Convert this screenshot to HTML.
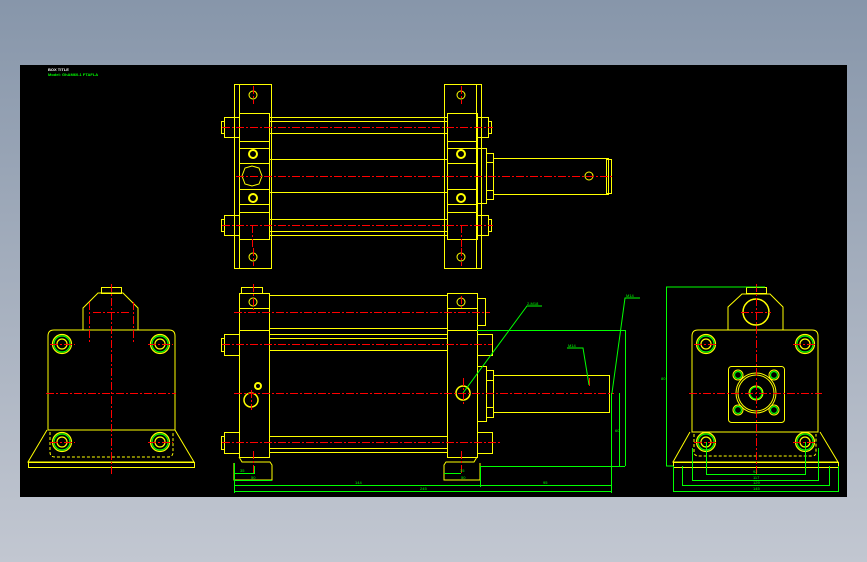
<!DOCTYPE html>
<html><head><meta charset="utf-8"><style>
html,body{margin:0;padding:0;width:867px;height:562px;overflow:hidden;background:linear-gradient(#8796aa,#c2c7d1);}
svg{position:absolute;left:0;top:0}
text{font-family:"Liberation Sans",sans-serif;}
</style></head><body>
<svg width="867" height="562" viewBox="0 0 867 562" xmlns="http://www.w3.org/2000/svg">
<rect x="20" y="65" width="827" height="432" fill="#000"/>
<text x="48" y="71" font-size="4" fill="#fff" font-weight="bold">BOX TITLE</text>
<text x="48" y="76" font-size="4" fill="#0f0" font-weight="bold">Model: GhAM60-1 FTAFLA</text>

<g fill="none" stroke="#ff0" stroke-width="1">
<!-- TOP VIEW -->
<rect x="234.5" y="84.5" width="37" height="184"/>
<line x1="239.5" y1="84" x2="239.5" y2="268"/>
<rect x="239.5" y="113.5" width="30" height="126"/>
<line x1="239" y1="141.5" x2="269" y2="141.5"/><line x1="239" y1="148.5" x2="269" y2="148.5"/>
<line x1="239" y1="163.5" x2="269" y2="163.5"/><line x1="239" y1="189.5" x2="269" y2="189.5"/>
<line x1="239" y1="204.5" x2="269" y2="204.5"/><line x1="239" y1="212.5" x2="269" y2="212.5"/>
<line x1="269" y1="117.5" x2="447" y2="117.5"/><line x1="269" y1="121.5" x2="447" y2="121.5"/><line x1="269" y1="133.5" x2="447" y2="133.5"/>
<line x1="269" y1="159.5" x2="447" y2="159.5"/><line x1="269" y1="192.5" x2="447" y2="192.5"/>
<line x1="269" y1="219.5" x2="447" y2="219.5"/><line x1="269" y1="231.5" x2="447" y2="231.5"/><line x1="269" y1="235.5" x2="447" y2="235.5"/>
<rect x="444.5" y="84.5" width="37" height="184"/>
<line x1="476.5" y1="84" x2="476.5" y2="268"/>
<rect x="447.5" y="113.5" width="30" height="126"/>
<line x1="447" y1="141.5" x2="477" y2="141.5"/><line x1="447" y1="148.5" x2="477" y2="148.5"/>
<line x1="447" y1="163.5" x2="477" y2="163.5"/><line x1="447" y1="189.5" x2="477" y2="189.5"/>
<line x1="447" y1="204.5" x2="477" y2="204.5"/><line x1="447" y1="212.5" x2="477" y2="212.5"/>
<rect x="224.5" y="117.5" width="15" height="20"/><rect x="221.5" y="121.5" width="3" height="12"/>
<rect x="224.5" y="215.5" width="15" height="20"/><rect x="221.5" y="219.5" width="3" height="12"/>
<rect x="477.5" y="117.5" width="11" height="20"/><rect x="488.5" y="121.5" width="3" height="12"/>
<rect x="477.5" y="215.5" width="11" height="20"/><rect x="488.5" y="219.5" width="3" height="12"/>
<rect x="477.5" y="148.5" width="9" height="55"/>
<rect x="486.5" y="153.5" width="7" height="9"/><rect x="486.5" y="190.5" width="7" height="9"/>
<rect x="493.5" y="158.5" width="115" height="36"/>
<rect x="606.5" y="159.5" width="5" height="34"/>
<circle cx="253" cy="95" r="4"/><circle cx="461" cy="95" r="4"/>
<circle cx="253" cy="257" r="4"/><circle cx="461" cy="257" r="4"/>
<circle cx="253" cy="154" r="4" stroke-width="2"/><circle cx="461" cy="154" r="4" stroke-width="2"/>
<circle cx="253" cy="198" r="4" stroke-width="2"/><circle cx="461" cy="198" r="4" stroke-width="2"/>
<polygon points="242,176 245,168 252,166 259,168 262,176 259,184 252,186 245,184"/>
<circle cx="589" cy="176" r="4"/>

<!-- FRONT VIEW -->
<rect x="241.5" y="287.5" width="21" height="6"/>
<rect x="239.5" y="293.5" width="30" height="164"/>
<line x1="239" y1="308.5" x2="269" y2="308.5"/><line x1="239" y1="330.5" x2="269" y2="330.5"/>
<line x1="269" y1="295.5" x2="447" y2="295.5"/>
<line x1="269" y1="328.5" x2="447" y2="328.5"/><line x1="269" y1="334.5" x2="447" y2="334.5"/>
<line x1="269" y1="338.5" x2="447" y2="338.5"/><line x1="269" y1="350.5" x2="447" y2="350.5"/>
<line x1="269" y1="436.5" x2="447" y2="436.5"/><line x1="269" y1="448.5" x2="447" y2="448.5"/><line x1="269" y1="452.5" x2="447" y2="452.5"/>
<rect x="447.5" y="293.5" width="30" height="164"/>
<line x1="447" y1="308.5" x2="477" y2="308.5"/><line x1="447" y1="330.5" x2="477" y2="330.5"/>
<rect x="224.5" y="334.5" width="15" height="21"/><rect x="221.5" y="338.5" width="3" height="13"/>
<rect x="224.5" y="432.5" width="15" height="21"/><rect x="221.5" y="436.5" width="3" height="13"/>
<rect x="477.5" y="334.5" width="15" height="21"/><rect x="477.5" y="432.5" width="15" height="21"/>
<rect x="477.5" y="298.5" width="8" height="27"/>
<path d="M239 457 L242 462 L270 462 L272 465 L272 480 L234 480 L234 463"/>
<path d="M477 457 L474 462 L446 462 L444 465 L444 480 L480 480 L480 463"/>
<rect x="477.5" y="366.5" width="9" height="55"/>
<rect x="486.5" y="370.5" width="7" height="10"/><rect x="486.5" y="407.5" width="7" height="10"/>
<rect x="493.5" y="375.5" width="116" height="37"/>
<circle cx="253" cy="302" r="4"/><circle cx="461" cy="302" r="4"/>
<circle cx="258" cy="386" r="3" stroke-width="2"/>
<circle cx="251" cy="400" r="7" stroke-width="1.5"/>
<circle cx="463" cy="393" r="7" stroke-width="1.5"/>

<!-- LEFT SIDE VIEW -->
<rect x="101.5" y="287.5" width="20" height="6"/>
<path d="M83 330 L83 308 L98 293 L123 293 L138 308 L138 330"/>
<path d="M54 330 L169 330 Q175 330 175 336 L175 430 L48 430 L48 336 Q48 330 54 330 Z"/>
<path d="M47 430 L28 462 L194 462 L175 430"/>
<rect x="28.5" y="462.5" width="166" height="5"/>
<path d="M50 432 L50 452 Q50 457 55 457 L168 457 Q173 457 173 452 L173 432" stroke-dasharray="3,2"/>
<!-- RIGHT SIDE VIEW -->
<rect x="746.5" y="287.5" width="20" height="6"/>
<path d="M728 330 L728 307 L742 294 L770 294 L783 307 L783 330"/>
<circle cx="756" cy="312" r="13" stroke-width="1.5"/>
<path d="M698 330 L812 330 Q818 330 818 336 L818 432 L692 432 L692 336 Q692 330 698 330 Z"/>
<path d="M690 432 L673 462 L838 462 L820 432"/>
<rect x="673.5" y="462.5" width="165" height="5"/>
<path d="M694 434 L694 452 Q694 456 699 456 L812 456 Q816 456 816 452 L816 434" stroke-dasharray="3,2"/>
<rect x="728.5" y="366.5" width="56" height="56" rx="3"/>
<circle cx="756" cy="393" r="18"/><circle cx="756" cy="393" r="20"/>
<circle cx="756" cy="393" r="7"/>
<circle cx="738" cy="375" r="5"/><circle cx="774" cy="375" r="5"/><circle cx="738" cy="410" r="5"/><circle cx="774" cy="410" r="5"/>
</g>

<!-- bolt hexes -->
<g fill="none" stroke-width="1.2">
<g stroke="#0f0">
<circle cx="62" cy="344" r="8"/><circle cx="160" cy="344" r="8"/><circle cx="62" cy="442" r="8"/><circle cx="160" cy="442" r="8"/>
<circle cx="706" cy="344" r="8"/><circle cx="805" cy="344" r="8"/><circle cx="706" cy="442" r="8"/><circle cx="805" cy="442" r="8"/>
<circle cx="756" cy="393" r="6"/>
<circle cx="738" cy="375" r="3.5"/><circle cx="774" cy="375" r="3.5"/><circle cx="738" cy="410" r="3.5"/><circle cx="774" cy="410" r="3.5"/>
</g>
<g stroke="#ff0">
<circle cx="62" cy="344" r="5"/><circle cx="160" cy="344" r="5"/><circle cx="62" cy="442" r="5"/><circle cx="160" cy="442" r="5"/>
<circle cx="706" cy="344" r="5"/><circle cx="805" cy="344" r="5"/><circle cx="706" cy="442" r="5"/><circle cx="805" cy="442" r="5"/>
<circle cx="62" cy="344" r="9.5"/><circle cx="160" cy="344" r="9.5"/><circle cx="62" cy="442" r="9.5"/><circle cx="160" cy="442" r="9.5"/>
<circle cx="706" cy="344" r="9.5"/><circle cx="805" cy="344" r="9.5"/><circle cx="706" cy="442" r="9.5"/><circle cx="805" cy="442" r="9.5"/>
</g>
</g>

<!-- center lines -->
<g stroke="#f00" stroke-width="1" stroke-dasharray="8,2,2,2" fill="none">
<line x1="236" y1="176.5" x2="614" y2="176.5"/>
<line x1="222" y1="127.5" x2="493" y2="127.5"/><line x1="222" y1="225.5" x2="493" y2="225.5"/>
<line x1="253.5" y1="86" x2="253.5" y2="104"/><line x1="461.5" y1="86" x2="461.5" y2="104"/>
<line x1="253.5" y1="248" x2="253.5" y2="266"/><line x1="461.5" y1="248" x2="461.5" y2="266"/>
<line x1="252.5" y1="225" x2="252.5" y2="248"/><line x1="461.5" y1="225" x2="461.5" y2="248"/>
<line x1="234" y1="312.5" x2="490" y2="312.5"/>
<line x1="222" y1="344.5" x2="492" y2="344.5"/>
<line x1="234" y1="393.5" x2="614" y2="393.5"/>
<line x1="222" y1="442.5" x2="500" y2="442.5"/>
<line x1="253.5" y1="284" x2="253.5" y2="310"/><line x1="461.5" y1="296" x2="461.5" y2="310"/>
<line x1="253.5" y1="451" x2="253.5" y2="474"/><line x1="461.5" y1="451" x2="461.5" y2="474"/>
<line x1="251.5" y1="390" x2="251.5" y2="410"/><line x1="463.5" y1="378" x2="463.5" y2="405"/>
<line x1="111.5" y1="284" x2="111.5" y2="474"/>
<line x1="46" y1="393.5" x2="176" y2="393.5"/>
<line x1="93" y1="312.5" x2="129" y2="312.5"/>
<line x1="89.5" y1="302" x2="89.5" y2="343"/><line x1="133.5" y1="302" x2="133.5" y2="343"/>
<line x1="50" y1="344.5" x2="75" y2="344.5"/><line x1="148" y1="344.5" x2="173" y2="344.5"/>
<line x1="50" y1="442.5" x2="75" y2="442.5"/><line x1="148" y1="442.5" x2="173" y2="442.5"/>
<line x1="756.5" y1="284" x2="756.5" y2="474"/>
<line x1="689" y1="393.5" x2="822" y2="393.5"/>
<line x1="741" y1="312.5" x2="771" y2="312.5"/>
<line x1="694" y1="344.5" x2="718" y2="344.5"/><line x1="793" y1="344.5" x2="817" y2="344.5"/>
<line x1="694" y1="442.5" x2="718" y2="442.5"/><line x1="793" y1="442.5" x2="817" y2="442.5"/>
<line x1="589.5" y1="378" x2="589.5" y2="388"/>
</g>

<!-- green dims -->
<g stroke="#0f0" stroke-width="1" fill="none">
<line x1="477" y1="330.5" x2="625" y2="330.5"/>
<line x1="625.5" y1="330" x2="625.5" y2="466"/>
<line x1="480" y1="466.5" x2="625" y2="466.5"/>
<line x1="619.5" y1="393" x2="619.5" y2="466"/>
<line x1="234.5" y1="463" x2="234.5" y2="493"/>
<line x1="234" y1="473.5" x2="254" y2="473.5"/><line x1="254.5" y1="466" x2="254.5" y2="474"/>
<line x1="234" y1="480.5" x2="272" y2="480.5"/>
<line x1="444" y1="473.5" x2="461" y2="473.5"/>
<line x1="234" y1="485.5" x2="611" y2="485.5"/>
<line x1="234" y1="491.5" x2="611" y2="491.5"/>
<line x1="480.5" y1="466" x2="480.5" y2="487"/>
<line x1="611.5" y1="393" x2="611.5" y2="493"/>
<polyline points="463,393 527,306 542,306"/>
<polyline points="589,385 583,348 567,348"/>
<polyline points="612,393 625,298 640,298"/>
<polyline points="765,287 666.5,287 666.5,466 673,466"/>
<line x1="706.5" y1="442" x2="706.5" y2="475"/><line x1="805.5" y1="442" x2="805.5" y2="475"/>
<line x1="706" y1="474.5" x2="805" y2="474.5"/>
<line x1="692.5" y1="448" x2="692.5" y2="481"/><line x1="818.5" y1="448" x2="818.5" y2="481"/>
<line x1="692" y1="480.5" x2="818" y2="480.5"/>
<line x1="682.5" y1="466" x2="682.5" y2="486"/><line x1="829.5" y1="466" x2="829.5" y2="486"/>
<line x1="682" y1="485.5" x2="829" y2="485.5"/>
<line x1="673.5" y1="466" x2="673.5" y2="492"/><line x1="838.5" y1="466" x2="838.5" y2="492"/>
<line x1="673" y1="491.5" x2="838" y2="491.5"/>
</g>
<g fill="#0f0" font-size="4">
<text x="240" y="472">35</text><text x="251" y="479">50</text><text x="460" y="472">35</text><text x="461" y="479">50</text>
<text x="355" y="484">144</text><text x="420" y="490">245</text><text x="543" y="484">95</text>
<text x="527" y="305">2-M18</text><text x="568" y="347">M14</text><text x="626" y="297">M14</text>
<text x="753" y="473">92</text><text x="753" y="479">117</text><text x="753" y="484">129</text><text x="753" y="490">145</text>
<text x="661" y="380">80</text><text x="615" y="432">60</text>
</g>
</svg>
</body></html>
